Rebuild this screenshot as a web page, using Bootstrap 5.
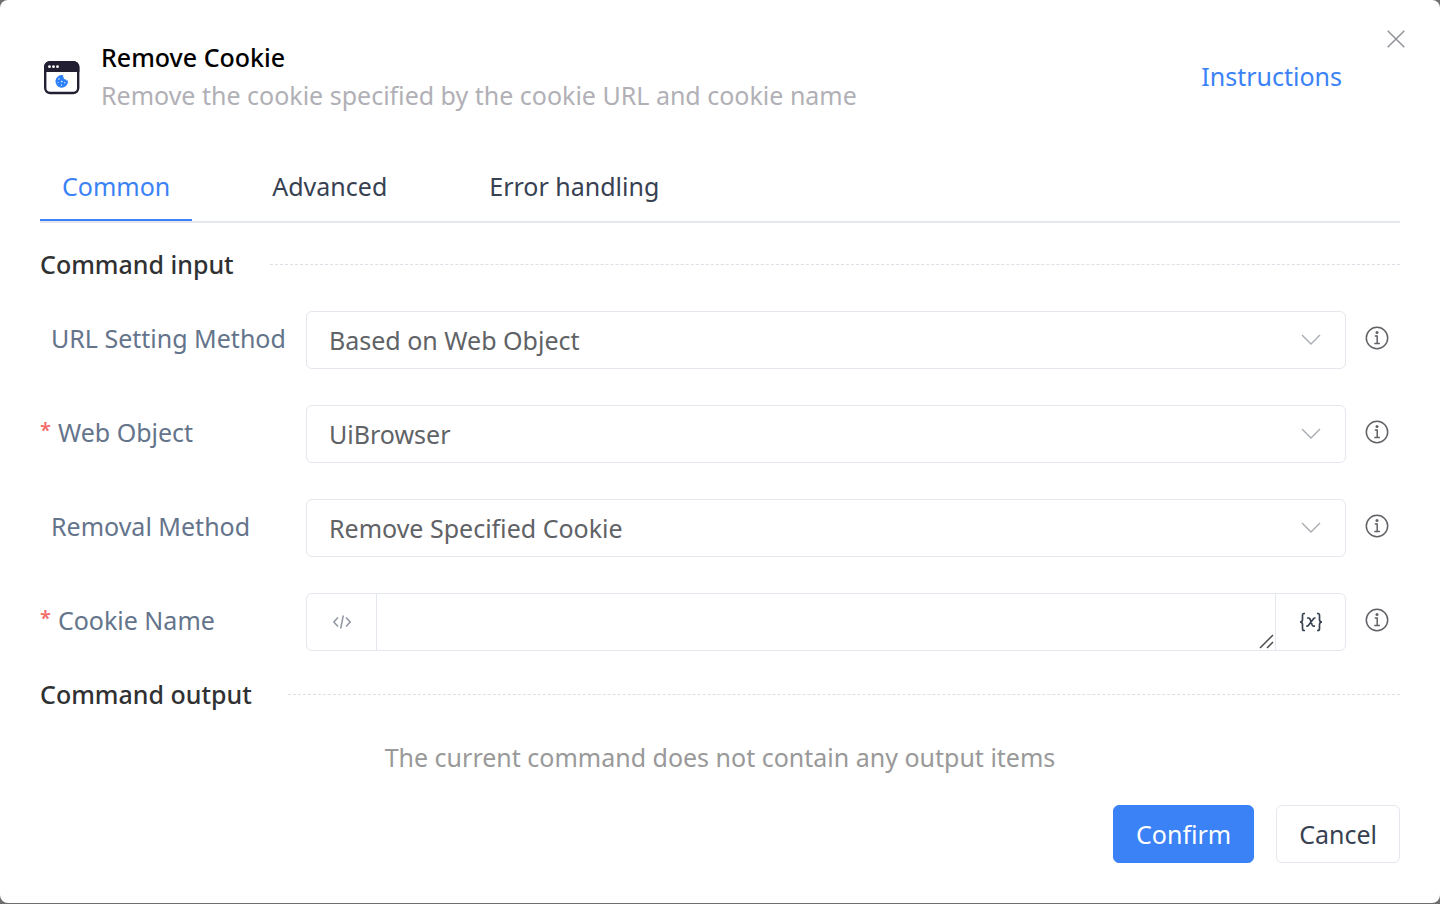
<!DOCTYPE html>
<html lang="en">
<head>
<meta charset="utf-8">
<meta name="viewport" content="width=device-width, initial-scale=1">
<title>Remove Cookie</title>
<link rel="stylesheet" href="https://cdn.jsdelivr.net/npm/bootstrap@5.3.0/dist/css/bootstrap.min.css">
<style>
body{background:#6e6e6e;font-family:"Noto Sans","Open Sans",sans-serif;font-size:25px;line-height:38px;color:#374151}
.cmd-dialog{min-height:calc(100vh - 1px);border-radius:8px;padding:38px 40px 40px}
.cmd-icon{width:44px;margin-right:17px;padding-top:4px}
.cmd-title{font-size:25px;line-height:38px;font-weight:500;color:#000}
.cmd-desc{color:#b1b0b6}
.cmd-link{color:#3b82f6;margin-right:58px}
.cmd-close{top:23px;right:28px;width:32px;height:32px}
.cmd-tabs{gap:58px;margin-top:43px;border-bottom:2px solid #e4e7ed}
.cmd-tabs .nav-link{padding:11px 22px 15px;line-height:36px;color:#374151;border-radius:0;border-bottom:2px solid transparent}
.cmd-tabs .nav-link.active{color:#3b82f6;border-bottom-color:#3b82f6}
.cmd-section{gap:36px}
.cmd-section h2{font-size:25px;line-height:38px;font-weight:500;color:#303133}
.cmd-tabs + .cmd-section{margin-top:22px}
.cmd-rule{border-top:1px dashed #dcdfe6}
.cmd-form{gap:36px;margin:28px 0 24px}
.cmd-label{width:266px;color:#64748b;padding:0 0 4px 11px}
.cmd-required{padding-left:0}
.cmd-required::before{content:"*";color:#f56c6c;font-size:20px;font-weight:600;line-height:20px;vertical-align:5px;margin-right:7px}
.cmd-field.form-select,.cmd-group{height:58px;border:1px solid #e4e7ed;border-radius:6px;background-color:#fff}
.cmd-field.form-select{background-image:none;font-size:25px;line-height:36px;padding:10px 60px 10px 22px;color:#606266}
.cmd-arrow{right:24px;pointer-events:none}
.cmd-info{width:54px;padding:0 0 4px 19px}
.cmd-group .btn{width:69px;border-radius:0}
.cmd-group textarea{height:56px;resize:none;border:solid #e4e7ed;border-width:0 1px;border-radius:0;font-size:25px;line-height:36px;padding:10px 22px}
.cmd-grip{right:2px;bottom:1px;pointer-events:none}
.cmd-empty{color:#999;margin-top:25px;margin-bottom:29px}
.cmd-action{font-size:25px;line-height:36px;padding:10px 22px;border-radius:6px}
.cmd-confirm{background:#3b82f6;border-color:#3b82f6;color:#fff}
.cmd-cancel{background:#fff;border-color:#e4e7ed;color:#374151}
.cmd-actions{gap:22px}
svg{display:block}
</style>
</head>
<body>
<svg class="d-none" aria-hidden="true">
  <symbol id="info" viewBox="0 0 24 24"><circle cx="12" cy="12" r="10.7" fill="none" stroke="#606266" stroke-width="1.5"/><circle cx="12" cy="6.400" r="1.5" fill="#606266"/><path d="M9.800 9.900h2.400v7.500M9.300 17.600h5.600" fill="none" stroke="#606266" stroke-width="1.500"/></symbol>
  <symbol id="chevron" viewBox="0 0 22 14"><path d="M2 2l9 9 9-9" fill="none" stroke="#a8abb2" stroke-width="1.4"/></symbol>
</svg>
<main class="cmd-dialog bg-white position-relative" role="dialog" aria-labelledby="title">
  <button type="button" class="btn cmd-close position-absolute p-0 border-0 d-flex align-items-center justify-content-center" aria-label="Close">
    <svg width="20" height="20" viewBox="0 0 20 20"><path d="M1.7 1.7l16.6 16.6M18.3 1.7L1.7 18.3" stroke="#909399" stroke-width="1.5" fill="none"/></svg>
  </button>
  <header class="d-flex align-items-center">
    <div class="cmd-icon flex-shrink-0 ps-1">
      <svg width="36" height="34" viewBox="0 0 36 34">
        <rect x="1.2" y="1.2" width="33" height="30.8" rx="5" fill="#fff" stroke="#231f32" stroke-width="2.4"/>
        <path d="M0 11V6a6 6 0 0 1 6-6h23.400a6 6 0 0 1 6 6v5z" fill="#231f32"/>
        <circle cx="5.500" cy="5.700" r="1.400" fill="#fff"/><circle cx="9.500" cy="5.700" r="1.400" fill="#fff"/><circle cx="13.500" cy="5.700" r="1.400" fill="#fff"/>
        <path d="M19.300 14.300A6.300 6.300 0 1 0 23.900 19.200Q22 19.900 21.500 18.200 19.200 18.600 19.700 16.500 18.600 15.500 19.300 14.300z" fill="#2e80fa"/>
        <g fill="#fff"><circle cx="15" cy="18" r=".7"/><circle cx="17.800" cy="20.600" r=".8"/><circle cx="14.100" cy="21.600" r=".5"/><circle cx="17.500" cy="24.100" r=".7"/><circle cx="20.800" cy="21.700" r=".6"/></g>
      </svg>
    </div>
    <div class="flex-grow-1">
      <h1 id="title" class="cmd-title mb-0">Remove Cookie</h1>
      <p class="cmd-desc mb-0">Remove the cookie specified by the cookie URL and cookie name</p>
    </div>
    <a href="#" class="cmd-link text-decoration-none">Instructions</a>
  </header>
  <nav class="nav cmd-tabs" role="tablist">
    <button type="button" class="nav-link active bg-transparent border-top-0 border-start-0 border-end-0" role="tab" aria-selected="true">Common</button>
    <button type="button" class="nav-link bg-transparent border-top-0 border-start-0 border-end-0" role="tab" aria-selected="false">Advanced</button>
    <button type="button" class="nav-link bg-transparent border-top-0 border-start-0 border-end-0" role="tab" aria-selected="false">Error handling</button>
  </nav>
  <div class="cmd-section d-flex align-items-center"><h2 class="mb-0">Command input</h2><div class="cmd-rule flex-grow-1"></div></div>
  <form class="cmd-form d-flex flex-column">
    <div class="d-flex align-items-center">
      <label class="cmd-label flex-shrink-0" for="urlMethod">URL Setting Method</label>
      <div class="position-relative flex-grow-1 d-flex align-items-center">
        <select id="urlMethod" class="form-select cmd-field"><option>Based on Web Object</option></select>
        <svg class="cmd-arrow position-absolute" width="22" height="14"><use href="#chevron"/></svg>
      </div>
      <div class="cmd-info flex-shrink-0"><svg width="24" height="24"><use href="#info"/></svg></div>
    </div>
    <div class="d-flex align-items-center">
      <label class="cmd-label cmd-required flex-shrink-0" for="webObject">Web Object</label>
      <div class="position-relative flex-grow-1 d-flex align-items-center">
        <select id="webObject" class="form-select cmd-field"><option>UiBrowser</option></select>
        <svg class="cmd-arrow position-absolute" width="22" height="14"><use href="#chevron"/></svg>
      </div>
      <div class="cmd-info flex-shrink-0"><svg width="24" height="24"><use href="#info"/></svg></div>
    </div>
    <div class="d-flex align-items-center">
      <label class="cmd-label flex-shrink-0" for="removal">Removal Method</label>
      <div class="position-relative flex-grow-1 d-flex align-items-center">
        <select id="removal" class="form-select cmd-field"><option>Remove Specified Cookie</option></select>
        <svg class="cmd-arrow position-absolute" width="22" height="14"><use href="#chevron"/></svg>
      </div>
      <div class="cmd-info flex-shrink-0"><svg width="24" height="24"><use href="#info"/></svg></div>
    </div>
    <div class="d-flex align-items-center">
      <label class="cmd-label cmd-required flex-shrink-0" for="cookieName">Cookie Name</label>
      <div class="cmd-group flex-grow-1 d-flex overflow-hidden">
        <button type="button" class="btn border-0 p-0 d-flex align-items-center justify-content-center flex-shrink-0" aria-label="Expression mode">
          <svg width="20" height="16" viewBox="0 0 20 16" fill="none" stroke="#9096a3" stroke-width="1.5"><path d="M6 3.500L1.800 8 6 12.500M14 3.500L18.200 8 14 12.500M11.300 1.500L8.700 14.500"/></svg>
        </button>
        <div class="position-relative flex-grow-1">
          <textarea id="cookieName" class="form-control" rows="1"></textarea>
          <svg class="cmd-grip position-absolute" width="15" height="15" viewBox="0 0 15 15" fill="none" stroke="#4a4a4a" stroke-width="1.500"><path d="M1 14L14 1M8 14l6-6"/></svg>
        </div>
        <button type="button" class="btn border-0 p-0 d-flex align-items-center justify-content-center flex-shrink-0" aria-label="Insert variable">
          <svg width="24" height="20" viewBox="0 0 24 20" fill="none" stroke="#374151" stroke-width="1.700"><path d="M6 1.500H5Q3.500 1.500 3.500 3.500V7.500Q3.500 10 1 10 3.500 10 3.500 12.500V16.500Q3.500 18.500 5 18.500H6M18 1.500h1q1.500 0 1.500 2V7.500Q20.500 10 23 10 20.500 10 20.500 12.500V16.500q0 2-1.500 2H18"/><path d="M8 6h1.500q1 0 1.500 1l2.200 6q.5 1.200 1.500 1.200H16M16.500 6h-.7q-.8 0-1.500.9L9.500 13.300q-.7.900-1.500.9H7.300"/></svg>
        </button>
      </div>
      <div class="cmd-info flex-shrink-0"><svg width="24" height="24"><use href="#info"/></svg></div>
    </div>
  </form>
  <div class="cmd-section d-flex align-items-center"><h2 class="mb-0">Command output</h2><div class="cmd-rule flex-grow-1"></div></div>
  <p class="cmd-empty text-center">The current command does not contain any output items</p>
  <footer class="cmd-actions d-flex justify-content-end">
    <button type="button" class="btn cmd-action cmd-confirm">Confirm</button>
    <button type="button" class="btn cmd-action cmd-cancel">Cancel</button>
  </footer>
</main>
<script src="https://cdn.jsdelivr.net/npm/bootstrap@5.3.0/dist/js/bootstrap.bundle.min.js"></script>
</body>
</html>
